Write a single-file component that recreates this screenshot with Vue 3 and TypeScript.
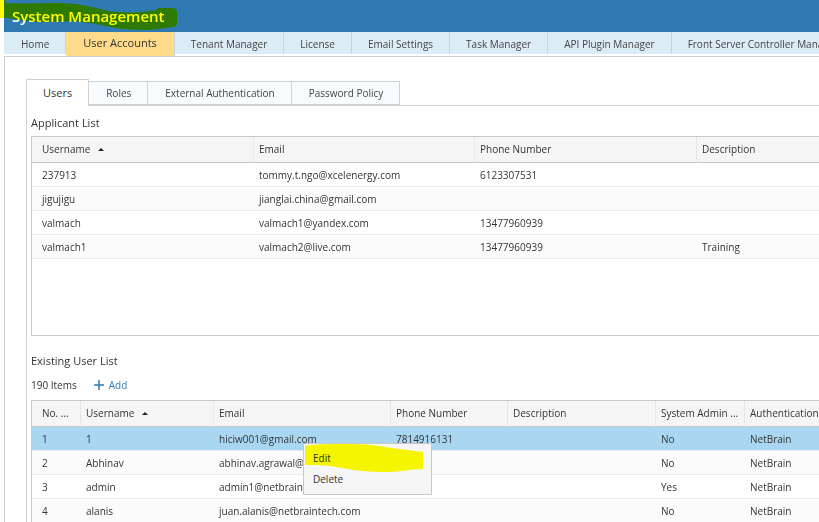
<script setup lang="ts">
import { ref } from 'vue'

interface Applicant {
  username: string
  email: string
  phone: string
  description: string
}

interface User extends Applicant {
  no: number
  admin: string
  auth: string
}

const sections: string[] = [
  'Home',
  'User Accounts',
  'Tenant Manager',
  'License',
  'Email Settings',
  'Task Manager',
  'API Plugin Manager',
  'Front Server Controller Manager',
]
const views: string[] = ['Users', 'Roles', 'External Authentication', 'Password Policy']

const activeSection = ref('User Accounts')
const activeView = ref('Users')
const selectedUser = ref(1)

const applicants: Applicant[] = [
  { username: '237913', email: 'tommy.t.ngo@xcelenergy.com', phone: '6123307531', description: '' },
  { username: 'jigujigu', email: 'jianglai.china@gmail.com', phone: '', description: '' },
  { username: 'valmach', email: 'valmach1@yandex.com', phone: '13477960939', description: '' },
  { username: 'valmach1', email: 'valmach2@live.com', phone: '13477960939', description: 'Training' },
]

const users: User[] = [
  { no: 1, username: '1', email: 'hiciw001@gmail.com', phone: '7814916131', description: '', admin: 'No', auth: 'NetBrain' },
  { no: 2, username: 'Abhinav', email: 'abhinav.agrawal@netbrain.com', phone: '', description: '', admin: 'No', auth: 'NetBrain' },
  { no: 3, username: 'admin', email: 'admin1@netbrain.com', phone: '', description: '', admin: 'Yes', auth: 'NetBrain' },
  { no: 4, username: 'alanis', email: 'juan.alanis@netbraintech.com', phone: '', description: '', admin: 'No', auth: 'NetBrain' },
]
</script>

<template>
  <div class="page">
    <header class="banner">
      <h1>System Management</h1>
      <svg class="marker title-marker" width="180" height="32" viewBox="0 0 180 32" aria-hidden="true">
        <path d="M0 0H5V3C25 4 40 3 58 3C78 3 92 7 108 11C126 13 140 13 156 10L158 8H172Q177 8 177 12V23Q177 27 172 27C162 28 155 30 142 30C124 30 110 27 96 24C76 20 58 22 40 22C28 22 18 19 5 18H0Z" fill="#ff0" />
      </svg>
    </header>

    <nav class="sections" aria-label="Sections">
      <a
        v-for="section in sections"
        :key="section"
        href="#"
        :class="{ active: section === activeSection }"
        @click.prevent="activeSection = section"
      >{{ section }}</a>
    </nav>

    <main class="content">
      <div class="views" role="tablist">
        <button
          v-for="view in views"
          :key="view"
          type="button"
          role="tab"
          :aria-selected="view === activeView"
          :class="{ active: view === activeView }"
          @click="activeView = view"
        >{{ view }}</button>
      </div>

      <section class="panel">
        <h2>Applicant List</h2>
        <div class="grid applicants">
          <table>
            <colgroup>
              <col class="w-222"><col class="w-221"><col class="w-222"><col class="w-222">
            </colgroup>
            <thead>
              <tr>
                <th>Username <span class="sort" /></th>
                <th>Email</th>
                <th>Phone Number</th>
                <th>Description</th>
              </tr>
            </thead>
            <tbody>
              <tr v-for="row in applicants" :key="row.username">
                <td>{{ row.username }}</td>
                <td>{{ row.email }}</td>
                <td>{{ row.phone }}</td>
                <td>{{ row.description }}</td>
              </tr>
            </tbody>
          </table>
        </div>

        <h2>Existing User List</h2>
        <div class="toolbar">
          <span>190 Items</span>
          <button type="button" class="add">
            <svg width="10" height="10" viewBox="0 0 10 10" aria-hidden="true">
              <path d="M5 0V10M0 5H10" stroke="currentColor" stroke-width="1.5" />
            </svg>
            Add
          </button>
        </div>
        <div class="grid users">
          <table>
            <colgroup>
              <col class="w-49"><col class="w-133"><col class="w-177"><col class="w-117"><col class="w-148"><col class="w-89"><col class="w-120">
            </colgroup>
            <thead>
              <tr>
                <th>No. ...</th>
                <th>Username <span class="sort" /></th>
                <th>Email</th>
                <th>Phone Number</th>
                <th>Description</th>
                <th>System Admin ...</th>
                <th>Authentication Type</th>
              </tr>
            </thead>
            <tbody>
              <tr
                v-for="row in users"
                :key="row.no"
                :class="{ selected: row.no === selectedUser }"
                @click="selectedUser = row.no"
              >
                <td>{{ row.no }}</td>
                <td>{{ row.username }}</td>
                <td>{{ row.email }}</td>
                <td>{{ row.phone }}</td>
                <td>{{ row.description }}</td>
                <td>{{ row.admin }}</td>
                <td>{{ row.auth }}</td>
              </tr>
            </tbody>
          </table>
          <div class="menu" role="menu">
            <button type="button" role="menuitem">Edit</button>
            <button type="button" role="menuitem">Delete</button>
            <svg class="marker menu-marker" width="122" height="32" viewBox="0 0 122 32" aria-hidden="true">
              <path d="M1 2C12 0 30 0 48 0C68 0 80 3 95 5L119 8V25C105 25 98 28 84 28C62 28 48 26 32 23C20 21 12 21 1 21Z" fill="#ff0" />
            </svg>
          </div>
        </div>
      </section>
    </main>
  </div>
</template>

<style>
body {
  overflow: hidden;
  background: #fff;
}
</style>

<style scoped>
.page {
  display: flex;
  flex-direction: column;
  height: 100vh;
  padding-left: 4px;
  overflow: hidden;
  box-sizing: border-box;
  background: #fff;
  color: #333;
  font: 10px/16px "Open Sans", "Noto Sans", sans-serif;
}

button {
  border: 0;
  padding: 0;
  background: none;
  color: inherit;
  font: inherit;
  cursor: pointer;
}

.banner {
  flex: none;
  display: flex;
  align-items: center;
  height: 32px;
  padding-left: 8px;
  background: #2f7ab3;
}

h1 {
  margin: 0;
  color: #fff;
  font-size: 15px;
  font-weight: 600;
}

.marker {
  position: absolute;
  mix-blend-mode: multiply;
  pointer-events: none;
}

.title-marker {
  top: 0;
  left: 0;
}

.sections {
  flex: none;
  display: flex;
  height: 24px;
  overflow: hidden;
}

.sections a {
  flex: none;
  height: 22px;
  padding: 0 16px;
  border-right: 1px solid #c3d5e2;
  background: #dcecf6;
  color: #444;
  line-height: 24px;
  text-decoration: none;
  white-space: nowrap;
}

.sections a:first-child {
  padding-left: 17px;
}

.sections a.active {
  height: 24px;
  padding: 0 17px;
  background: #fddb8a;
  color: #333;
  font-size: 11px;
  line-height: 22px;
}

.content {
  flex: 1;
  min-height: 0;
  padding: 22px 0 0 21px;
  border-top: 1px solid #d0d0d0;
  border-left: 1px solid #d0d0d0;
}

.views {
  display: flex;
  align-items: flex-end;
  height: 26px;
}

.views button {
  height: 24px;
  padding: 0 16px 0 17px;
  border: 1px solid #c8d4dc;
  border-left: 0;
  border-bottom-color: #d0d0d0;
  background: #f7fbfe;
  color: #444;
}

.views button.active {
  position: relative;
  height: 27px;
  margin-bottom: -1px;
  padding: 0 16px;
  border: 1px solid #d0d0d0;
  border-bottom: 0;
  background: #fff;
  color: #333;
  font-size: 11px;
}

.panel {
  height: 100%;
  padding: 8px 0 0 4px;
  border-top: 1px solid #d0d0d0;
  border-left: 1px solid #d0d0d0;
}

h2 {
  margin: 0;
  font-size: 11px;
  font-weight: 400;
  line-height: 18px;
}

.grid {
  position: relative;
  border: 1px solid #c8c8c8;
  border-right: 0;
}

.applicants {
  height: 198px;
  margin: 4px 0 16px;
  overflow: hidden;
}

.users {
  margin-top: 7px;
  overflow: hidden;
}

table {
  width: 100%;
  border-collapse: separate;
  border-spacing: 0;
  table-layout: fixed;
}

.w-49 { width: 49px; }
.w-89 { width: 89px; }
.w-117 { width: 117px; }
.w-120 { width: 120px; }
.w-133 { width: 133px; }
.w-148 { width: 148px; }
.w-177 { width: 177px; }
.w-221 { width: 221px; }
.w-222 { width: 222px; }

th,
td {
  box-sizing: border-box;
  height: 24px;
  padding: 0 0 0 5px;
  overflow: hidden;
  border-bottom: 1px solid #ebebeb;
  font-weight: 400;
  text-align: left;
  white-space: nowrap;
}

th {
  height: 26px;
  padding-bottom: 2px;
  border-right: 1px solid #e6e6e6;
  border-bottom-color: #c8c8c8;
  background: #f5f5f5;
}

th:first-child,
td:first-child {
  padding-left: 10px;
}

tbody tr:nth-child(even) {
  background: #fbfbfb;
}

tbody tr.selected {
  background: #a9d7f2;
}

.sort {
  display: inline-block;
  margin: 0 0 2px 5px;
  border: 3px solid transparent;
  border-top: 0;
  border-bottom-color: #222;
}

.toolbar {
  display: flex;
  gap: 17px;
  padding-top: 7px;
}

.add {
  display: flex;
  align-items: center;
  gap: 5px;
  color: #2f7ab3;
}

.menu {
  position: absolute;
  top: 42px;
  left: 271px;
  display: flex;
  flex-direction: column;
  width: 129px;
  padding: 3px 0 5px;
  box-sizing: border-box;
  border: 1px solid #c8c8c8;
  background: #f5f5f5;
}

.menu button {
  height: 21px;
  padding-left: 9px;
  text-align: left;
}

.menu-marker {
  top: 0;
  left: 0;
}
</style>
